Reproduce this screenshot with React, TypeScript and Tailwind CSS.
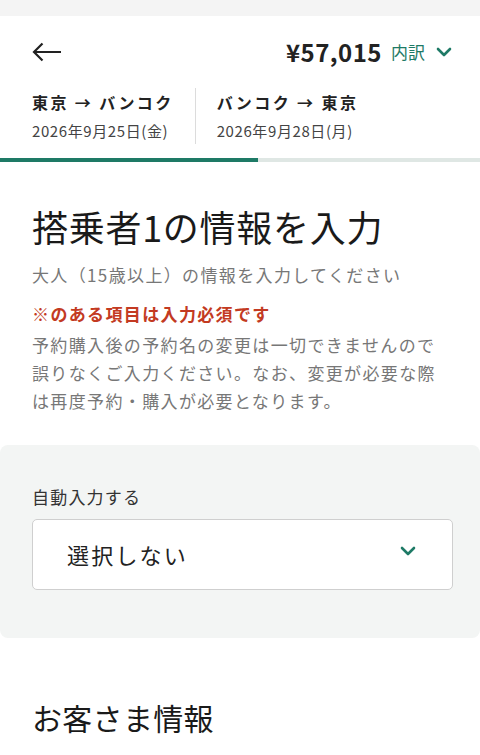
import { FC } from 'react';

const font = { fontFamily: '"Noto Sans CJK JP", "Noto Sans", sans-serif' };

const Chevron: FC<{ className?: string }> = ({ className }) => (
	<svg viewBox="0 0 16 10" className={className} fill="none">
		<path d="M2 2l6 6 6-6" stroke="currentColor" strokeWidth="2.6" strokeLinecap="round" strokeLinejoin="round" />
	</svg>
);

const Route: FC<{ title: string; date: string }> = ({ title, date }) => (
	<div className="flex flex-col">
		<p className="text-[16px] font-bold leading-[28px] tracking-[0.15em] text-[#222]">{title}</p>
		<p className="mt-[2px] text-[15px] leading-[26px] tracking-[0.04em] text-[#444]">{date}</p>
	</div>
);

const App: FC = () => {
	return (
		<div className="w-[480px] min-h-[755px] bg-white" style={font}>
			<div className="h-4 bg-[#f4f4f4]" />

			{/* Header */}
			<header className="px-8">
				<div className="flex h-[72px] items-center justify-between">
					<svg viewBox="0 0 30 20" className="h-5 w-[30px] text-[#222]" fill="none">
						<path d="M29 10H2M10.5 1.5L2 10l8.5 8.5" stroke="currentColor" strokeWidth="2.2" />
					</svg>
					<div className="flex items-center">
						<span className="text-[24px] font-bold tracking-[0.02em] text-[#222]">¥57,015</span>
						<span className="ml-[9px] text-[17px] text-[#1e7a66]">内訳</span>
						<Chevron className="ml-[11px] mr-[-4px] h-[10px] w-[16px] text-[#1e7a66]" />
					</div>
				</div>
				<div className="flex items-stretch pb-[14px]">
					<Route title="東京 → バンコク" date="2026年9月25日(金)" />
					<div className="mx-[21px] w-px bg-[#dcdcdc]" />
					<Route title="バンコク → 東京" date="2026年9月28日(月)" />
				</div>
			</header>
			<div className="flex h-1">
				<div className="w-[258px] bg-[#1e7a66]" />
				<div className="flex-1 bg-[#dfe7e4]" />
			</div>

			{/* Intro */}
			<section className="px-8 pt-[42px] pb-[30px]">
				<h1 className="text-[36px] leading-[44px] tracking-[0.02em] text-[#1a1a1a]">搭乗者1の情報を入力</h1>
				<p className="mt-[13px] text-[17px] leading-[28px] tracking-[0.08em] text-[#777]">
					大人（15歳以上）の情報を入力してください
				</p>
				<p className="mt-[11px] text-[17px] leading-[28px] tracking-[0.08em] text-[#c33a22]">
					※<span className="font-bold">のある項目は入力必須です</span>
				</p>
				<p className="mt-[3px] text-[17px] leading-[28px] tracking-[0.08em] text-[#777]">
					予約購入後の予約名の変更は一切できませんので誤りなくご入力ください。なお、変更が必要な際は再度予約・購入が必要となります。
				</p>
			</section>

			{/* Auto fill */}
			<section className="rounded-lg bg-[#f3f5f4] pl-8 pr-[27px] pt-[39px] pb-[48px]">
				<label className="block text-[17px] leading-[26px] tracking-[0.07em] text-[#333]">自動入力する</label>
				<button className="mt-[9px] flex h-[71px] w-full items-center justify-between rounded-[5px] border border-[#cfcfcf] bg-white pl-[34px] pr-[36px]">
					<span className="text-[22px] tracking-[0.1em] text-[#222]">選択しない</span>
					<Chevron className="h-[10px] w-[16px] -translate-y-[4px] text-[#1e7a66]" />
				</button>
			</section>

			{/* Customer info */}
			<section className="px-8 pt-[59px]">
				<h2 className="text-[30px] leading-[40px] tracking-[0.01em] text-[#1a1a1a]">お客さま情報</h2>
			</section>
		</div>
	);
};

export default App;
